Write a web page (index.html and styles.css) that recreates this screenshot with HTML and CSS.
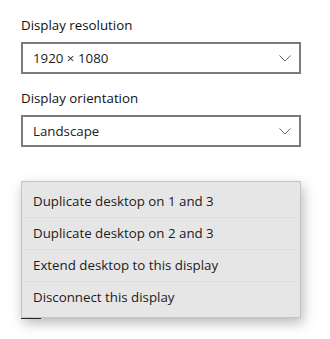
FILE: index.html
```html
<!DOCTYPE html>
<html lang="en">
<head>
    <meta charset="UTF-8">
    <meta name="viewport" content="width=device-width, initial-scale=1.0">
    <title>Display settings</title>
    <link rel="stylesheet" href="styles.css">
</head>
<body>
    <div class="settings">
        <div class="field">
            <div class="label">Display resolution</div>
            <div class="select">
                <span>1920 × 1080</span>
                <svg class="chevron" width="12" height="7" viewBox="0 0 12 7"><path d="M0.5 0.5 L6 6 L11.5 0.5" fill="none" stroke="#6a6a6a" stroke-width="1"/></svg>
            </div>
        </div>
        <div class="field">
            <div class="label">Display orientation</div>
            <div class="select">
                <span>Landscape</span>
                <svg class="chevron" width="12" height="7" viewBox="0 0 12 7"><path d="M0.5 0.5 L6 6 L11.5 0.5" fill="none" stroke="#6a6a6a" stroke-width="1"/></svg>
            </div>
        </div>
        <div class="under"></div>
    </div>

    <div class="menu">
        <div class="menu-item">Duplicate desktop on 1 and 3</div>
        <div class="menu-item">Duplicate desktop on 2 and 3</div>
        <div class="menu-item">Extend desktop to this display</div>
        <div class="menu-item">Disconnect this display</div>
    </div>
</body>
</html>
```

FILE: styles.css
```css
* {
    box-sizing: border-box;
    margin: 0;
    padding: 0;
}

body {
    background: #ffffff;
    font-family: 'Open Sans', 'Noto Sans', sans-serif;
    font-size: 13.3px;
    color: #1a1a1a;
    position: relative;
    height: 339px;
    overflow: hidden;
}

.settings {
    padding: 14px 29px 0 21px;
    display: flex;
    flex-direction: column;
    gap: 13px;
}

.field {
    display: flex;
    flex-direction: column;
    gap: 6px;
}

.label {
    line-height: 22px;
    color: #111;
}

.select {
    height: 32px;
    border: 2px solid #7a7a7a;
    display: flex;
    align-items: center;
    justify-content: space-between;
    padding: 0 8px 0 10px;
    color: #222;
}

.chevron {
    margin-top: 1px;
}

.under {
    position: absolute;
    left: 21px;
    top: 317px;
    width: 20px;
    height: 2px;
    background: #333;
}

.menu {
    position: absolute;
    left: 21px;
    top: 181px;
    width: 280px;
    background: #e6e6e6;
    border: 1px solid #c4c4c4;
    padding: 3px 0 4px;
    box-shadow: 2px 5px 12px rgba(0, 0, 0, 0.28);
}

.menu-item {
    height: 32px;
    line-height: 32px;
    padding-left: 11px;
    color: #1c1c1c;
    box-shadow: inset 0 1px 0 #dedede;
}

.menu-item:first-child {
    box-shadow: none;
}
```
